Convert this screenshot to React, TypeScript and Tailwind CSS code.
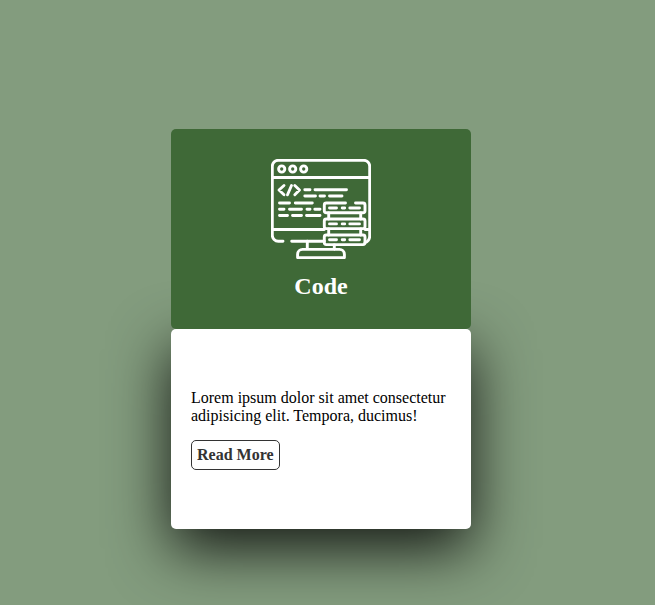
function CodeIcon() {
  return (
    <svg
      viewBox="0 0 100 100"
      className="size-[100px]"
      fill="none"
      stroke="#fff"
      strokeWidth="2.9"
      strokeLinecap="round"
      strokeLinejoin="round"
      aria-hidden="true"
    >
      {/* monitor frame */}
      <path d="M12 82.3H7.3a6 6 0 0 1-6-6V7.3a6 6 0 0 1 6-6h85.4a6 6 0 0 1 6 6V77q0 5-4.7 6.6" />
      <path d="M1.3 18.5h97.4M1.3 70.5h52M94 70.5h4.7M20.7 82.3h32.6" />
      <circle cx="10.7" cy="10" r="3.1" />
      <circle cx="21.7" cy="10" r="3.1" />
      <circle cx="32.7" cy="10" r="3.1" />
      {/* code tag */}
      <path d="M13 26.5 8 31l5 4.7M20.5 26.5l-4 9.3M23.8 26.5l4.7 4.5-4.7 4.7" />
      {/* lines of code */}
      <path d="M33.8 30.7H39M44 30.7h31.5M33.8 37H44.5M49 37h4.5M58.5 37H71" />
      <path d="M8.5 44H18.5M24.3 44H41.3M8.5 50.3H13M18.5 50.3h12M36 50.3h3M43.8 50.3H49M8.5 56.5h8M21.5 56.5h9M35.5 56.5H49" />
      {/* stand */}
      <path d="M36.3 82.3v8M63.3 86v4.5M26.6 98.6v-3.3a5 5 0 0 1 5-4.9h36.8a5 5 0 0 1 5 4.9v3.3z" />
      {/* server stack */}
      <path d="M74.5 44H55.3a2 2 0 0 0-2 2v5.8a2 2 0 0 0 2 2H92a2 2 0 0 0 2-2V46a2 2 0 0 0-2-2h-7.5" />
      <rect x="53.3" y="60" width="40.7" height="9.6" rx="2" />
      <rect x="53.3" y="76" width="40.7" height="9.6" rx="2" />
      <path d="M57.7 54v6M89.7 54v6M57.7 70v6M89.7 70v6" />
      <path d="M58.5 49h7M71.2 49h2.5M78.8 49h9.7M58.5 64.9h7M71.2 64.9h2.5M78.8 64.9h9.7M58.5 80.8h7M71.2 80.8h2.5M78.8 80.8h9.7" />
    </svg>
  );
}

export default function App() {
  return (
    <main className="flex min-h-screen items-start justify-center bg-[#839c7e] pt-[129px] pr-[13px] font-['Liberation_Serif',serif] text-base leading-[18px] text-black">
      <article className="w-full max-w-[300px]">
        <header className="relative z-10 flex h-[200px] flex-col items-center gap-[13px] rounded-[5px] bg-[#3f6937] pt-[30px]">
          <CodeIcon />
          <h2 className="text-2xl leading-7 font-bold text-white">Code</h2>
        </header>
        <div className="flex h-[200px] flex-col items-start justify-center gap-[15px] rounded-[5px] bg-white p-5 shadow-[0_20px_60px_rgba(0,0,0,0.85)]">
          <p>Lorem ipsum dolor sit amet consectetur adipisicing elit. Tempora, ducimus!</p>
          <a
            href="#"
            className="rounded-[5px] border border-[#333] p-[5px] font-bold text-[#333]"
          >
            Read More
          </a>
        </div>
      </article>
    </main>
  );
}
